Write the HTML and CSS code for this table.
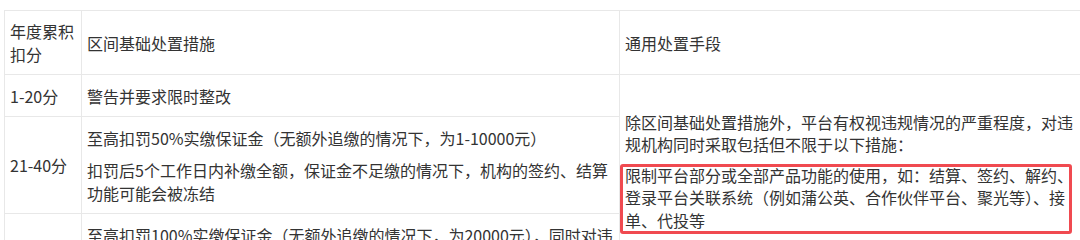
FILE: index.html
```html
<!DOCTYPE html>
<html lang="zh-CN">
<head>
<meta charset="utf-8">
<title>处置措施</title>
<link rel="stylesheet" href="styles.css">
</head>
<body>
<div class="page">
  <table class="rules">
    <colgroup>
      <col class="col-score">
      <col class="col-basic">
      <col class="col-general">
    </colgroup>
    <tbody>
      <tr>
        <td>年度累积扣分</td>
        <td>区间基础处置措施</td>
        <td>通用处置手段</td>
      </tr>
      <tr>
        <td>1-20分</td>
        <td>警告并要求限时整改</td>
        <td rowspan="3" class="general">
          <p>除区间基础处置措施外，平台有权视违规情况的严重程度，对违规机构同时采取包括但不限于以下措施：</p>
          <p class="marked">限制平台部分或全部产品功能的使用，如：结算、签约、解约、登录平台关联系统（例如蒲公英、合作伙伴平台、聚光等）、接单、代投等</p>
        </td>
      </tr>
      <tr>
        <td>21-40分</td>
        <td>
          <p>至高扣罚50%实缴保证金（无额外追缴的情况下，为1-10000元）</p>
          <p>扣罚后5个工作日内补缴全额，保证金不足缴的情况下，机构的签约、结算功能可能会被冻结</p>
        </td>
      </tr>
      <tr>
        <td>41-60分</td>
        <td>
          <p>至高扣罚100%实缴保证金（无额外追缴的情况下，为20000元），同时对违规机构进行限流处理</p>
          <p>扣罚后5个工作日内补缴全额，保证金不足缴的情况下，机构的签约、结算功能可能会被冻结</p>
        </td>
      </tr>
    </tbody>
  </table>
</div>
</body>
</html>
```

FILE: styles.css
```css
html, body {
  margin: 0;
  padding: 0;
  background: #ffffff;
}

.page {
  width: 1080px;
  height: 240px;
  overflow: hidden;
  padding: 10px 0 0 4px;
  box-sizing: border-box;
}

.rules {
  border-collapse: collapse;
  table-layout: fixed;
  width: 1078px;
  font-family: "Noto Sans CJK SC", "Noto Sans", sans-serif;
  font-size: 16px;
  line-height: 22.4px;
  color: #333333;
}

.col-score { width: 77px; }
.col-basic { width: 538px; }
.col-general { width: 463px; }

.rules td {
  border: 1px solid #e8e8e8;
  padding: 9.3px 5px;
  vertical-align: middle;
  text-align: left;
}

.rules p {
  margin: 0;
}

.rules p + p {
  margin-top: 10px;
}

.rules td.general {
  vertical-align: top;
  padding-top: 35.5px;
}

.rules td.general p + p {
  margin-top: 8px;
}

.marked {
  position: relative;
}

.marked::after {
  content: "";
  position: absolute;
  top: 0;
  bottom: -3.5px;
  left: -5px;
  right: 5px;
  border: 3px solid #f04a50;
  border-radius: 3px;
  pointer-events: none;
}
```
